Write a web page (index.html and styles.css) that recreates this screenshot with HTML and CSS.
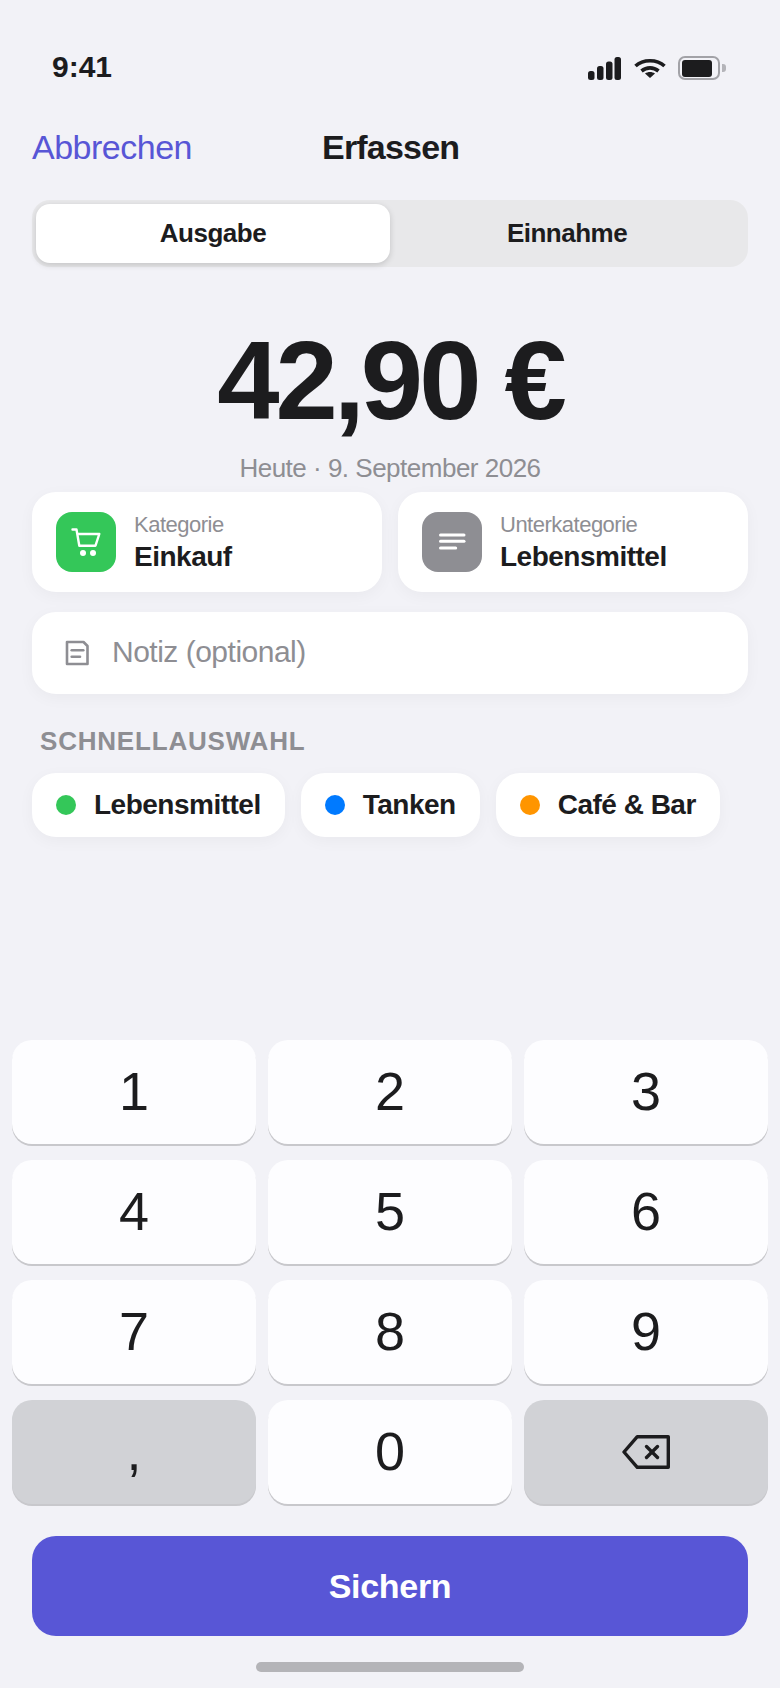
FILE: index.html
```html
<!DOCTYPE html>
<html lang="de">

<head>
    <meta charset="UTF-8">
    <meta name="viewport" content="width=device-width, initial-scale=1.0">
    <title>Erfassen</title>
    <link rel="stylesheet" href="styles.css">
</head>

<body>
    <div class="screen">
        <div class="status-bar">
            <span class="status-bar__time">9:41</span>
            <div class="status-bar__icons">
                <svg class="icon-signal" width="33" height="23" viewBox="0 0 33 23" fill="#1c1c1e">
                    <rect x="0" y="14" width="6.5" height="9" rx="2.5"></rect>
                    <rect x="9" y="9" width="6.5" height="14" rx="2.5"></rect>
                    <rect x="18" y="4.5" width="6.5" height="18.5" rx="2.5"></rect>
                    <rect x="26.5" y="0" width="6.5" height="23" rx="2.5"></rect>
                </svg>
                <svg class="icon-wifi" width="32" height="20" viewBox="0 0 32 20" fill="none" stroke="#1c1c1e" stroke-width="3.6">
                    <path d="M1.5 8C9 1 23 1 30.5 8"></path>
                    <path d="M7.5 13C12.5 8.8 19.5 8.8 24.5 13"></path>
                    <path d="M16 20L11 15.5C14 13.5 18 13.5 21 15.5Z" fill="#1c1c1e" stroke="none"></path>
                </svg>
                <div class="battery">
                    <div class="battery__body"><div class="battery__fill"></div></div>
                    <div class="battery__nub"></div>
                </div>
            </div>
        </div>

        <div class="nav">
            <span class="nav__cancel">Abbrechen</span>
            <span class="nav__title">Erfassen</span>
        </div>

        <div class="segment">
            <div class="segment__item segment__item--active">Ausgabe</div>
            <div class="segment__item">Einnahme</div>
        </div>

        <div class="amount">42,90 €</div>
        <div class="date">Heute · 9. September 2026</div>

        <div class="pickers">
            <div class="picker">
                <div class="picker__icon picker__icon--green">
                    <svg width="30" height="30" viewBox="0 0 30 30" fill="none" stroke="#fff" stroke-width="2.4" stroke-linecap="round" stroke-linejoin="round">
                        <path d="M1.5 2.5H5.5L8.3 18.7H24.5L28.3 7H6.2"></path>
                        <circle cx="12" cy="26" r="3" fill="#fff" stroke="none"></circle>
                        <circle cx="22" cy="26" r="3" fill="#fff" stroke="none"></circle>
                    </svg>
                </div>
                <div class="picker__text">
                    <span class="picker__label">Kategorie</span>
                    <span class="picker__value">Einkauf</span>
                </div>
            </div>
            <div class="picker">
                <div class="picker__icon picker__icon--gray">
                    <svg width="30" height="30" viewBox="0 0 30 30" fill="none" stroke="#fff" stroke-width="3" stroke-linecap="round">
                        <path d="M3.5 8H27"></path>
                        <path d="M3.5 14.3H27"></path>
                        <path d="M3.5 21H18.7"></path>
                    </svg>
                </div>
                <div class="picker__text">
                    <span class="picker__label">Unterkategorie</span>
                    <span class="picker__value">Lebensmittel</span>
                </div>
            </div>
        </div>

        <div class="note">
            <svg width="24" height="26" viewBox="0 0 24 26" fill="none" stroke="#8e8e93" stroke-width="2.6" stroke-linejoin="round" stroke-linecap="round">
                <path d="M2 2H18.5L22.5 6V24H2Z"></path>
                <path d="M6.7 10.3H18.3"></path>
                <path d="M6.7 16.7H15"></path>
            </svg>
            <span class="note__text">Notiz (optional)</span>
        </div>

        <div class="section-title">SCHNELLAUSWAHL</div>
        <div class="chips">
            <div class="chip"><span class="chip__dot chip__dot--green"></span>Lebensmittel</div>
            <div class="chip"><span class="chip__dot chip__dot--blue"></span>Tanken</div>
            <div class="chip"><span class="chip__dot chip__dot--orange"></span>Café &amp; Bar</div>
        </div>

        <div class="keypad">
            <div class="key">1</div>
            <div class="key">2</div>
            <div class="key">3</div>
            <div class="key">4</div>
            <div class="key">5</div>
            <div class="key">6</div>
            <div class="key">7</div>
            <div class="key">8</div>
            <div class="key">9</div>
            <div class="key key--gray">,</div>
            <div class="key">0</div>
            <div class="key key--gray key--icon">
                <svg width="48" height="34" viewBox="0 0 48 34" fill="none" stroke="#1c1c1e" stroke-width="3.4" stroke-linejoin="round" stroke-linecap="round">
                    <path d="M15.3 1.7H46.3V32.3H15.3L2 17Z"></path>
                    <path d="M24.5 11.5L35.5 22.5"></path>
                    <path d="M35.5 11.5L24.5 22.5"></path>
                </svg>
            </div>
        </div>

        <div class="save">Sichern</div>
        <div class="home-bar"></div>
    </div>
</body>

</html>
```

FILE: styles.css
```css
* {
    box-sizing: border-box;
}

body {
    margin: 0;
    background: #f2f2f7;
    color: #1c1c1e;
    font-family: "Liberation Sans", Arial, sans-serif;
}

.screen {
    width: 780px;
    height: 1688px;
    overflow: hidden;
    display: flex;
    flex-direction: column;
    padding: 0 32px;
}

.status-bar {
    height: 134px;
    padding: 0 22px 0 20px;
    display: flex;
    justify-content: space-between;
    align-items: center;
    flex: none;
}

.status-bar__time {
    font-size: 30px;
    font-weight: 700;
}

.status-bar__icons {
    margin-top: 2px;
    display: flex;
    align-items: center;
    gap: 12.5px;
}

.battery {
    display: flex;
    align-items: center;
    gap: 2px;
}

.battery__body {
    width: 42px;
    height: 24px;
    border: 2.5px solid #a2a2a7;
    border-radius: 7px;
    padding: 1.5px;
}

.battery__fill {
    width: 30px;
    height: 100%;
    background: #1c1c1e;
    border-radius: 3px;
}

.battery__nub {
    width: 4px;
    height: 8px;
    background: #b4b4b9;
    border-radius: 0 3px 3px 0;
}

.nav {
    height: 28px;
    padding-bottom: 2px;
    display: flex;
    align-items: center;
    flex: none;
}

.nav__cancel {
    width: 290px;
    font-size: 34px;
    letter-spacing: -0.5px;
    color: #5856d6;
}

.nav__title {
    font-size: 34px;
    font-weight: 700;
    letter-spacing: -0.8px;
}

.segment {
    margin-top: 38px;
    height: 67px;
    padding: 4px;
    background: #e8e8ea;
    border-radius: 18px;
    display: flex;
    flex: none;
}

.segment__item {
    flex: 1;
    display: flex;
    align-items: center;
    justify-content: center;
    font-size: 26px;
    font-weight: 700;
    letter-spacing: -0.5px;
    border-radius: 14px;
}

.segment__item--active {
    background: #fff;
    box-shadow: 0 2px 6px rgba(0, 0, 0, 0.16);
}

.amount {
    margin-top: 45px;
    text-align: center;
    font-size: 112px;
    line-height: 138px;
    font-weight: 700;
    letter-spacing: -4px;
    flex: none;
}

.date {
    text-align: center;
    font-size: 26px;
    line-height: 36px;
    letter-spacing: -0.5px;
    color: #8e8e93;
    flex: none;
}

.pickers {
    margin-top: 6px;
    display: flex;
    gap: 16px;
    flex: none;
}

.picker {
    flex: 1;
    height: 100px;
    padding: 20px 24px;
    background: #fff;
    border-radius: 24px;
    box-shadow: 0 4px 16px rgba(0, 0, 0, 0.04);
    display: flex;
    align-items: center;
    gap: 18px;
}

.picker__icon {
    width: 60px;
    height: 60px;
    border-radius: 16px;
    display: flex;
    align-items: center;
    justify-content: center;
    flex: none;
}

.picker__icon--green {
    background: #34c759;
}

.picker__icon--gray {
    background: #8e8e93;
}

.picker__text {
    display: flex;
    flex-direction: column;
    gap: 1px;
}

.picker__label {
    font-size: 22px;
    line-height: 28px;
    letter-spacing: -0.5px;
    color: #8e8e93;
}

.picker__value {
    font-size: 28px;
    line-height: 34px;
    font-weight: 700;
    letter-spacing: -0.5px;
}

.note {
    margin-top: 20px;
    height: 82px;
    padding: 0 33px 2px;
    background: #fff;
    border-radius: 24px;
    box-shadow: 0 4px 16px rgba(0, 0, 0, 0.04);
    display: flex;
    align-items: center;
    gap: 23px;
    flex: none;
}

.note svg {
    margin-top: 2px;
}

.note__text {
    font-size: 30px;
    letter-spacing: -0.5px;
    color: #8e8e93;
}

.section-title {
    margin-top: 32px;
    padding-left: 8px;
    font-size: 26px;
    line-height: 30px;
    font-weight: 700;
    letter-spacing: 0.8px;
    color: #8e8e93;
    flex: none;
}

.chips {
    margin-top: 17px;
    display: flex;
    gap: 16px;
    flex: none;
}

.chip {
    height: 64px;
    padding: 0 24px;
    background: #fff;
    border-radius: 24px;
    box-shadow: 0 4px 16px rgba(0, 0, 0, 0.04);
    display: flex;
    align-items: center;
    gap: 18px;
    font-size: 28px;
    font-weight: 700;
    letter-spacing: -0.5px;
    white-space: nowrap;
    flex: none;
}

.chip__dot {
    width: 20px;
    height: 20px;
    border-radius: 50%;
}

.chip__dot--green {
    background: #34c759;
}

.chip__dot--blue {
    background: #007aff;
}

.chip__dot--orange {
    background: #ff9500;
}

.keypad {
    margin: auto -20px 0;
    display: grid;
    grid-template-columns: repeat(3, 1fr);
    grid-auto-rows: 104px;
    gap: 16px 12px;
    flex: none;
}

.key {
    background: #fdfdff;
    border-radius: 20px;
    box-shadow: 0 2px 0 #c8c8cc;
    display: flex;
    align-items: center;
    justify-content: center;
    padding-bottom: 3px;
    font-size: 54px;
}

.key--gray {
    background: #d1d2d6;
}

.key--icon {
    padding-bottom: 0;
}

.save {
    margin-top: 32px;
    height: 100px;
    background: #5856d6;
    border-radius: 24px;
    color: #fff;
    font-size: 34px;
    font-weight: 700;
    letter-spacing: -0.3px;
    display: flex;
    align-items: center;
    justify-content: center;
    flex: none;
}

.home-bar {
    margin: 26px auto 16px;
    width: 268px;
    height: 10px;
    background: #b4b4b8;
    border-radius: 5px;
    flex: none;
}
```
